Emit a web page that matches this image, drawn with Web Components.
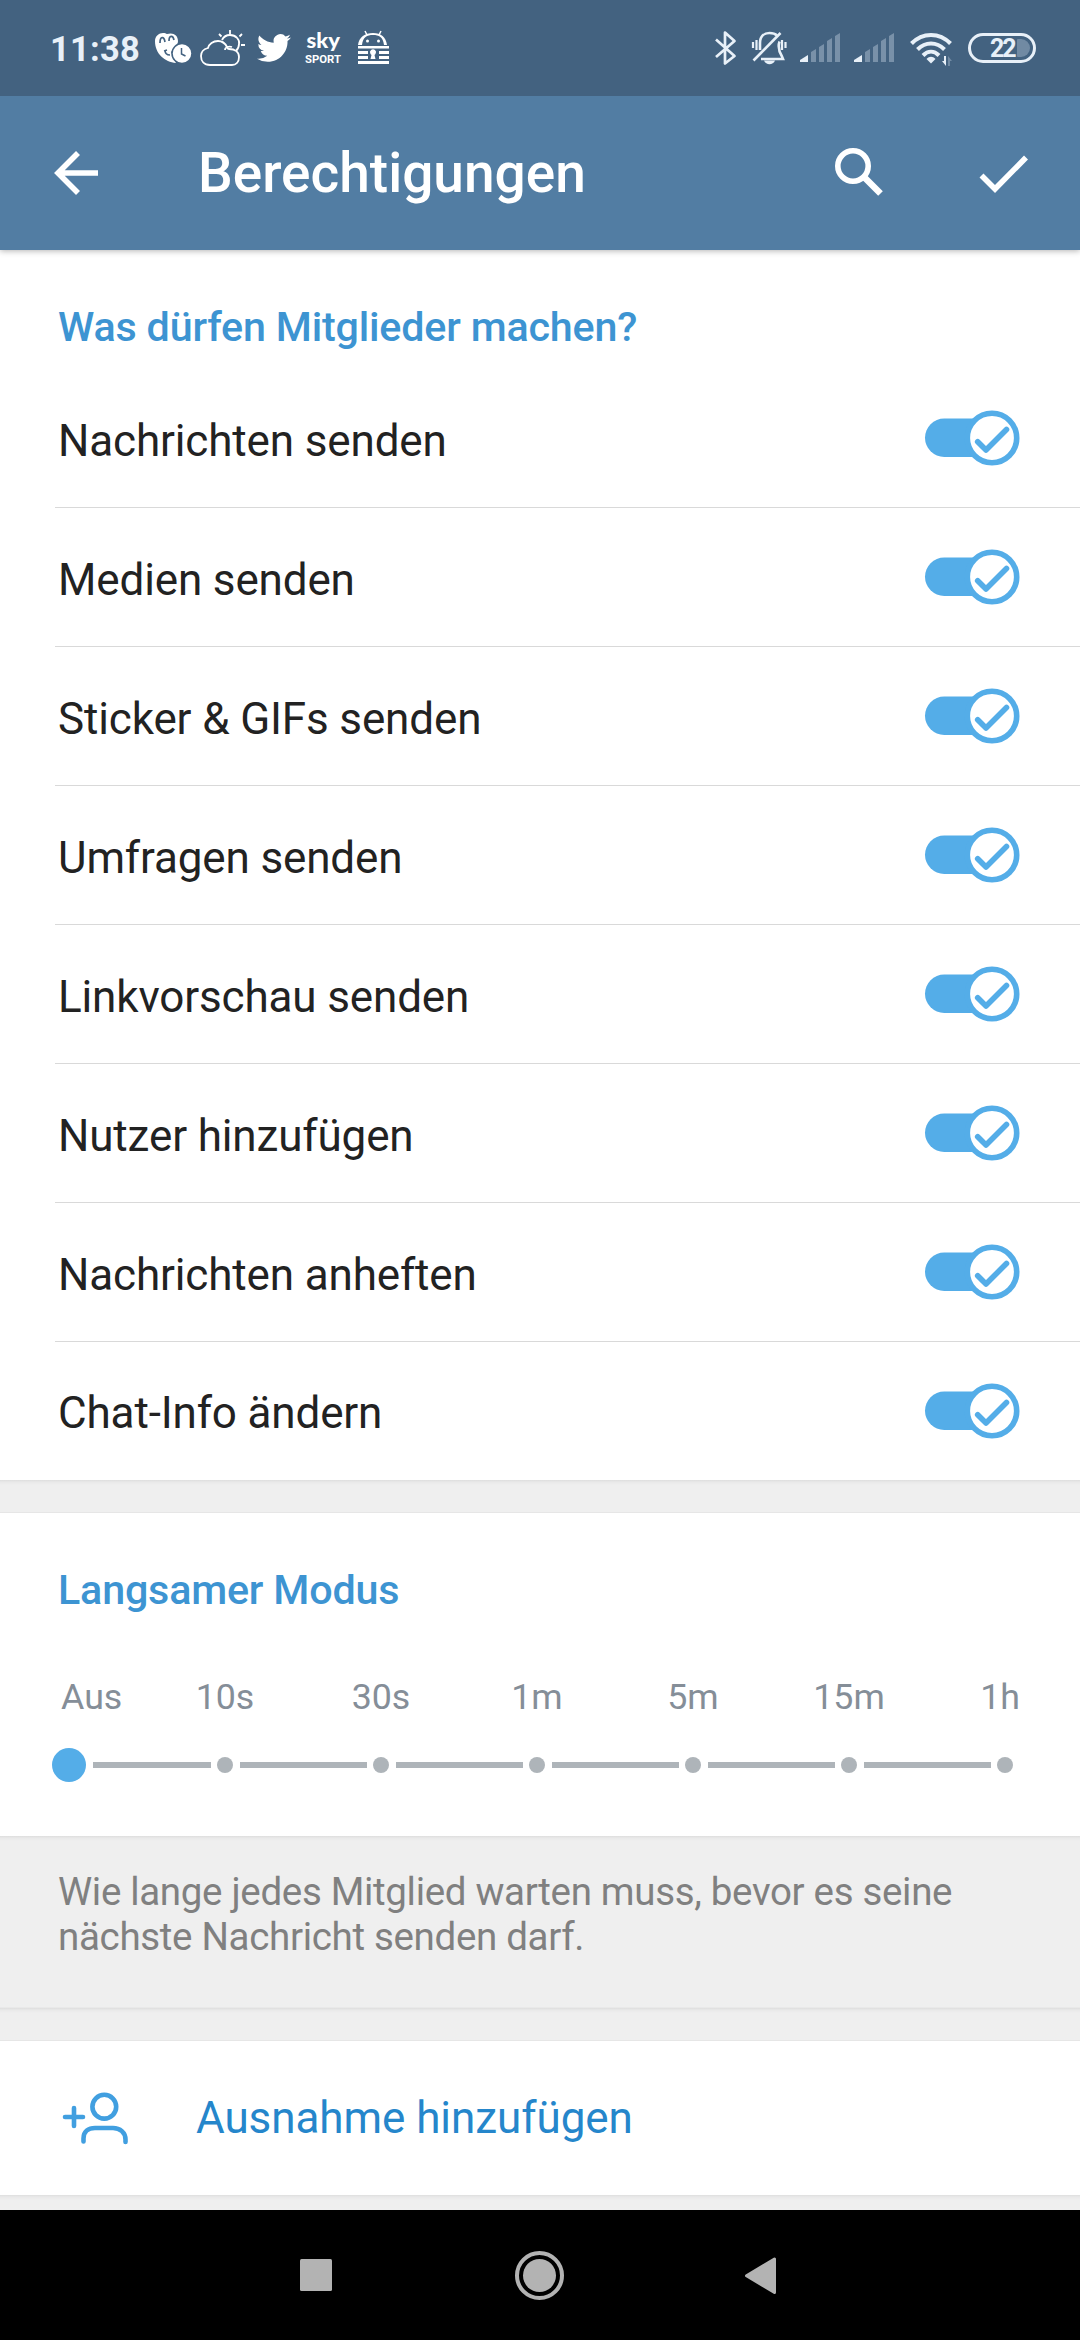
<!DOCTYPE html>
<html lang="de">
<head>
<meta charset="utf-8">
<title>Berechtigungen</title>
<style>
    body {
        margin: 0;
        width: 1080px;
        height: 2340px;
        overflow: hidden;
        background: #efefef;
        font-family: Roboto, "Noto Sans", sans-serif;
    }
</style>
</head>
<body>
<permissions-screen></permissions-screen>
<script>
    class StatusBar extends HTMLElement {
        constructor() {
            super();
            this.attachShadow({ mode: "open" }).innerHTML = /*html*/ `
                <style>
                    :host {
                        display: flex;
                        justify-content: space-between;
                        height: 96px;
                        background: #436280;
                        color: #e8f0f8;
                    }
                    .group { display: flex; height: 96px; }
                    .left { padding-left: 50px; }
                    .right { padding-right: 44px; }
                    time {
                        width: 105px;
                        font-size: 34.5px;
                        font-weight: 700;
                        line-height: 98px;
                        letter-spacing: 0.2px;
                        white-space: nowrap;
                    }
                    svg { display: block; height: 96px; fill: none; stroke: none; }
                    .battery {
                        display: flex;
                        align-items: center;
                        align-self: center;
                        box-sizing: border-box;
                        width: 68px;
                        height: 30px;
                        border: 3px solid #e8f0f8;
                        border-radius: 15px;
                        padding-left: 19px;
                    }
                    .battery b { width: 27px; padding-top: 2px; font-size: 25px; letter-spacing: -2px; line-height: 24px; }
                    .battery i { width: 13px; height: 18px; background: #718aa3; border-radius: 1px 9px 9px 1px; }
                </style>
                <div class="group left">
                    <time>11:38</time>
                    <svg width="37" viewBox="155 0 37 96">
                        <path fill="#fff" d="M155 41c0-5 4-8 8-8 2 0 3 .5 4 1 6-2 11 1 11 7 0 2-1 4-2 6l-5 5 5 11c-11-1-21-9-21-22z"/>
                        <path stroke="#436280" stroke-width="1.7" d="M160 43c0-7 4-7 5-1M169 41c0-6 4-6 5-1"/>
                        <path stroke="#436280" stroke-width="1.5" d="M165 50c0 3 2 5 5 5M164 51l3-1"/>
                        <circle cx="182" cy="53.5" r="10" fill="#fff" stroke="#436280" stroke-width="1.5"/>
                        <path stroke="#436280" stroke-width="1.5" d="M181.5 48v6l4 2"/>
                    </svg>
                    <svg width="46" viewBox="200 0 46 96" style="margin-left:8px">
                        <path stroke="#fff" stroke-width="1.8" d="M210 65c-6 0-9-4-9-9 0-4 3-7 7-8 1-4 5-7 10-7 4 0 7 2 9 6 1 1 0 2 2 2 6 0 10 3 10 8s-3 8-7 8zM222 40c2-4 5-5 8-5 6 0 10 5 9 9 0 3-1 5-3 7M225 50c0-3 4-4 7-3M230 30v4M219 34l2.500 2.500M239.500 36.500l2.500-2.500M241 45h4"/>
                    </svg>
                    <svg width="34" viewBox="0 0 24 24" style="margin-left:11px">
                        <path fill="#fff" d="M23.95 4.57a10 10 0 0 1-2.82.77 4.96 4.96 0 0 0 2.16-2.72c-.95.56-2 .96-3.13 1.19a4.92 4.92 0 0 0-8.38 4.48C7.69 8.09 4.07 6.13 1.64 3.16a4.82 4.82 0 0 0-.67 2.48c0 1.71.87 3.21 2.19 4.1a4.9 4.9 0 0 1-2.23-.62v.06a4.92 4.92 0 0 0 3.95 4.83 5 5 0 0 1-2.21.08 4.94 4.94 0 0 0 4.6 3.42A9.87 9.87 0 0 1 0 19.54a13.99 13.99 0 0 0 7.55 2.21c9.05 0 14-7.5 14-13.98 0-.21 0-.42-.02-.63a9.94 9.94 0 0 0 2.46-2.55z"/>
                    </svg>
                    <svg width="38" viewBox="304 0 38 96" fill="#fff" style="margin:0 15px 0 13px;fill:#fff">
                        <text x="306.500" y="47.500" textLength="33.500" lengthAdjust="spacingAndGlyphs" font-family="Lato, sans-serif" font-weight="900" font-size="20.500">sky</text>
                        <text x="305" y="62.700" textLength="36" lengthAdjust="spacingAndGlyphs" font-family="Roboto, sans-serif" font-weight="700" font-size="10.300">SPORT</text>
                    </svg>
                    <svg width="32" viewBox="357 0 32 96">
                        <path fill="#fff" d="M358 45h4c1-8 5-10 11-10s10 2 11 10h3c-1-8-6-12-14-12s-14 4-15 12zM358 46h31v2.5h-31zM358 51h31v3h-31zM358 56h31v3h-31zM358 61h31v3h-31z"/>
                        <path stroke="#fff" stroke-width="1.5" d="M365 31l2 4M381 31l-2 4"/>
                        <circle cx="367.5" cy="41" r="1.5" fill="#fff"/><circle cx="378.5" cy="41" r="1.5" fill="#fff"/>
                        <path fill="#436280" d="M368 49h11v11h-11z"/>
                        <path fill="#fff" d="M370.5 54a3 3 0 1 1 5 0l-1 1 1 4h-5l1-4z"/>
                    </svg>
                </div>
                <div class="group right">
                    <svg width="23" viewBox="713 0 23 96">
                        <path stroke="#e8f0f8" stroke-width="2.7" stroke-linejoin="round" d="M715 39.500l18.500 16.500-9.500 7.500v-31l9.500 8.500L715 57"/>
                    </svg>
                    <svg width="36" viewBox="750 0 36 96" style="margin-left:14px">
                        <g stroke="#e8f0f8" stroke-width="2.6">
                            <path d="M776 35.500c-2-2-5-2.500-7.500-2.500-6 0-9.500 4-9.500 10v7M778.500 41.500c-2 6 0 11 2.500 15l1 2.500H760"/>
                            <path d="M779.500 33L752.500 60.500"/>
                            <path stroke-width="2.2" d="M752 42v6M755.500 40v10M784.500 42v6M781 40v10"/>
                        </g>
                        <path fill="#e8f0f8" d="M763 60.500h11c-2 5-9 5-11 0z"/>
                    </svg>
                    <svg width="41" viewBox="799 0 41 96" style="margin-left:13px">
                        <path fill="#e8f0f8" d="M799 62v-2l8-5v7z"/>
                        <path fill="#7991a9" d="M810 62V52l5-3v13zM818 62V47l5-3v18zM826 62V41l5-3v24zM834 62V36l5-3v29z"/>
                    </svg>
                    <svg width="41" viewBox="799 0 41 96" style="margin-left:13px">
                        <path fill="#e8f0f8" d="M799 62v-2l8-5v7z"/>
                        <path fill="#7991a9" d="M810 62V52l5-3v13zM818 62V47l5-3v18zM826 62V41l5-3v24zM834 62V36l5-3v29z"/>
                    </svg>
                    <svg width="43" viewBox="909 0 43 96" style="margin:0 15px">
                        <path stroke="#e8f0f8" stroke-width="4" d="M910.500 43.500c11-11.500 28-11.500 39 0M916.500 49.500c8-8 19-8 27 0M922 55.500c5-5 11-5 16 0"/>
                        <path fill="#e8f0f8" d="M925.500 59c3-3 6-3 9 0l-4.500 4.500z"/>
                        <path fill="#e8f0f8" d="M943 56h2v10l-4-5h2z"/>
                        <path fill="#718aa3" d="M947 66V56l4 5h-2v5z"/>
                    </svg>
                    <div class="battery"><b>22</b><i></i></div>
                </div>
            `;
        }
    }
    customElements.define("status-bar", StatusBar);

    class AppBar extends HTMLElement {
        constructor() {
            super();
            this.attachShadow({ mode: "open" }).innerHTML = /*html*/ `
                <style>
                    :host {
                        display: flex;
                        align-items: center;
                        height: 154px;
                        background: #527da3;
                        color: #fff;
                        box-shadow: 0 1px 6px rgba(0, 0, 0, 0.3);
                        clip-path: inset(0 0 -8px 0);
                        position: relative;
                    }
                    h1 {
                        flex: 1;
                        margin: 0;
                        font-size: 55px;
                        font-weight: 500;
                        line-height: 154px;
                    }
                    svg { display: block; height: 154px; fill: none; stroke: #fff; stroke-width: 5.6; }
                </style>
                <svg width="198" viewBox="0 96 198 154"><path d="M98 173H58M78 153L58 173l20 20"/></svg>
                <h1><slot></slot></h1>
                <svg width="280" viewBox="800 96 280 154">
                    <circle cx="853" cy="166" r="15.2"/>
                    <path stroke-width="6.5" d="M865 178l15.500 15.500"/>
                    <path d="M981.500 175.500l13.500 13.500 31-31.500"/>
                </svg>
            `;
        }
    }
    customElements.define("app-bar", AppBar);

    class SettingsSection extends HTMLElement {
        constructor() {
            super();
            this.attachShadow({ mode: "open" }).innerHTML = /*html*/ `
                <style>
                    :host { display: block; box-sizing: border-box; background: #fff; }
                    h2 {
                        box-sizing: border-box;
                        height: 119px;
                        margin: 0;
                        padding: 53px 58px 0;
                        color: #3d94d2;
                        font-size: 41.25px;
                        font-weight: 500;
                        line-height: 48px;
                        letter-spacing: -0.19px;
                    }
                </style>
                <h2>${this.getAttribute("heading")}</h2>
                <slot></slot>
            `;
        }
    }
    customElements.define("settings-section", SettingsSection);

    class ToggleRow extends HTMLElement {
        constructor() {
            super();
            this.attachShadow({ mode: "open" }).innerHTML = /*html*/ `
                <style>
                    :host {
                        display: flex;
                        align-items: center;
                        justify-content: space-between;
                        box-sizing: border-box;
                        height: 139px;
                        margin-left: 55px;
                        padding: 0 60px 0 3px;
                        border-bottom: 1px solid #d9d9d9;
                        color: #222;
                        font-size: 44px;
                        letter-spacing: -0.14px;
                    }
                    :host(:last-of-type) { height: 138px; border: 0; }
                    span { padding-top: 5px; line-height: 60px; }
                    :host(:last-of-type) span { padding-top: 3px; }
                    svg { display: block; }
                </style>
                <span><slot></slot></span>
                <svg width="96" height="58" viewBox="924 409 96 58">
                    <rect x="925" y="418.5" width="70" height="38.5" rx="19.25" fill="#54ade8"/>
                    <circle cx="992" cy="438" r="24.7" fill="#fff" stroke="#54ade8" stroke-width="5.6"/>
                    <path fill="none" stroke="#54ade8" stroke-width="5.6" stroke-linecap="round" stroke-linejoin="round" d="M977.700 441.700l8.300 8.300 20.500-20.500"/>
                </svg>
            `;
        }
    }
    customElements.define("toggle-row", ToggleRow);

    class StepSlider extends HTMLElement {
        constructor() {
            super();
            const steps = this.getAttribute("steps").split(",");
            this.attachShadow({ mode: "open" }).innerHTML = /*html*/ `
                <style>
                    :host { display: block; height: 204px; overflow: hidden; }
                    .labels {
                        display: grid;
                        grid-template-columns: repeat(${steps.length}, 156px);
                        margin: 44px 0 30px -9px;
                        color: #858e98;
                        font-size: 35.75px;
                        line-height: 42px;
                        text-align: center;
                    }
                    .labels span:first-child { text-align: left; padding-left: 70px; }
                    .labels span:last-child { text-align: right; padding-right: 63px; }
                    .track { display: flex; align-items: center; height: 34px; padding-left: 52px; }
                    .dot { flex: none; width: 16px; height: 16px; border-radius: 50%; background: #aeb4b9; }
                    .dot.active { width: 34px; height: 34px; background: #54ade8; }
                    .line { width: 127px; height: 6px; margin: 0 6px 0 7px; background: #aeb4b9; }
                    .dot.active + .line { width: 118px; }
                </style>
                <div class="labels">${steps.map(s => `<span>${s}</span>`).join("")}</div>
                <div class="track">
                    ${steps.map((s, i) => i === 0 ? `<div class="dot active"></div>` : `<div class="line"></div><div class="dot"></div>`).join("")}
                </div>
            `;
        }
    }
    customElements.define("step-slider", StepSlider);

    // grey strip between sections, carries the soft shadow of the card above
    class SectionGap extends HTMLElement {
        constructor() {
            super();
            this.attachShadow({ mode: "open" }).innerHTML = /*html*/ `
                <style>
                    :host {
                        display: block;
                        box-sizing: border-box;
                        height: 33px;
                        border-bottom: 1px solid #e6e6e6;
                        background: linear-gradient(#dedede, #e9e9e9 2px, #efefef 5px);
                        color: #808080;
                        font-size: 38.5px;
                        line-height: 45px;
                        letter-spacing: -0.32px;
                    }
                    :host([info]) { height: 172px; padding: 33px 58px 0; border-bottom-color: #e9e9e9; }
                    :host([last]) { height: 15px; border: 0; }
                </style>
                <slot></slot>
            `;
        }
    }
    customElements.define("section-gap", SectionGap);

    class AddException extends HTMLElement {
        constructor() {
            super();
            this.attachShadow({ mode: "open" }).innerHTML = /*html*/ `
                <style>
                    :host {
                        display: flex;
                        align-items: center;
                        height: 154px;
                        background: #fff;
                        color: #2586cb;
                        font-size: 44px;
                        letter-spacing: -0.06px;
                    }
                    svg { display: block; fill: none; stroke: #419fe0; stroke-width: 4.6; stroke-linecap: round; }
                </style>
                <svg width="196" height="154" viewBox="0 2041 196 154">
                    <circle cx="104.3" cy="2106.7" r="11.9"/>
                    <path d="M65 2117h18M74 2108v18M83.500 2141.500v-3c0-7 5-10.500 11.500-10.500h18c7 0 12.500 4.500 12.500 11.500v2.500"/>
                </svg>
                <span><slot></slot></span>
            `;
        }
    }
    customElements.define("add-exception", AddException);

    class NavBar extends HTMLElement {
        constructor() {
            super();
            this.attachShadow({ mode: "open" }).innerHTML = /*html*/ `
                <style>
                    :host { display: block; height: 130px; background: #000; }
                    svg { display: block; }
                </style>
                <svg width="1080" height="130" viewBox="0 2210 1080 130" fill="#b3b3b3">
                    <rect x="300" y="2259" width="32" height="32" rx="1.5"/>
                    <circle cx="539.5" cy="2275.5" r="16.5"/>
                    <circle cx="539.5" cy="2275.5" r="22.5" fill="none" stroke="#b3b3b3" stroke-width="4"/>
                    <path stroke="#b3b3b3" stroke-width="3" stroke-linejoin="round" d="M774.500 2259v33.500L746.500 2275.700z"/>
                </svg>
            `;
        }
    }
    customElements.define("nav-bar", NavBar);

    class PermissionsScreen extends HTMLElement {
        constructor() {
            super();
            const permissions = [
                "Nachrichten senden",
                "Medien senden",
                "Sticker &amp; GIFs senden",
                "Umfragen senden",
                "Linkvorschau senden",
                "Nutzer hinzufügen",
                "Nachrichten anheften",
                "Chat-Info ändern",
            ];
            this.attachShadow({ mode: "open" }).innerHTML = /*html*/ `
                <style>
                    :host { display: flex; flex-direction: column; width: 1080px; height: 2340px; }
                    :host > * { flex: none; }
                </style>
                <status-bar></status-bar>
                <app-bar>Berechtigungen</app-bar>
                <settings-section heading="Was dürfen Mitglieder machen?">
                    ${permissions.map(p => `<toggle-row>${p}</toggle-row>`).join("")}
                </settings-section>
                <section-gap></section-gap>
                <settings-section heading="Langsamer Modus">
                    <step-slider steps="Aus,10s,30s,1m,5m,15m,1h"></step-slider>
                </settings-section>
                <section-gap info>Wie lange jedes Mitglied warten muss, bevor es seine<br>nächste Nachricht senden darf.</section-gap>
                <section-gap></section-gap>
                <add-exception>Ausnahme hinzufügen</add-exception>
                <section-gap last></section-gap>
                <nav-bar></nav-bar>
            `;
        }
    }
    customElements.define("permissions-screen", PermissionsScreen);
</script>
</body>
</html>
